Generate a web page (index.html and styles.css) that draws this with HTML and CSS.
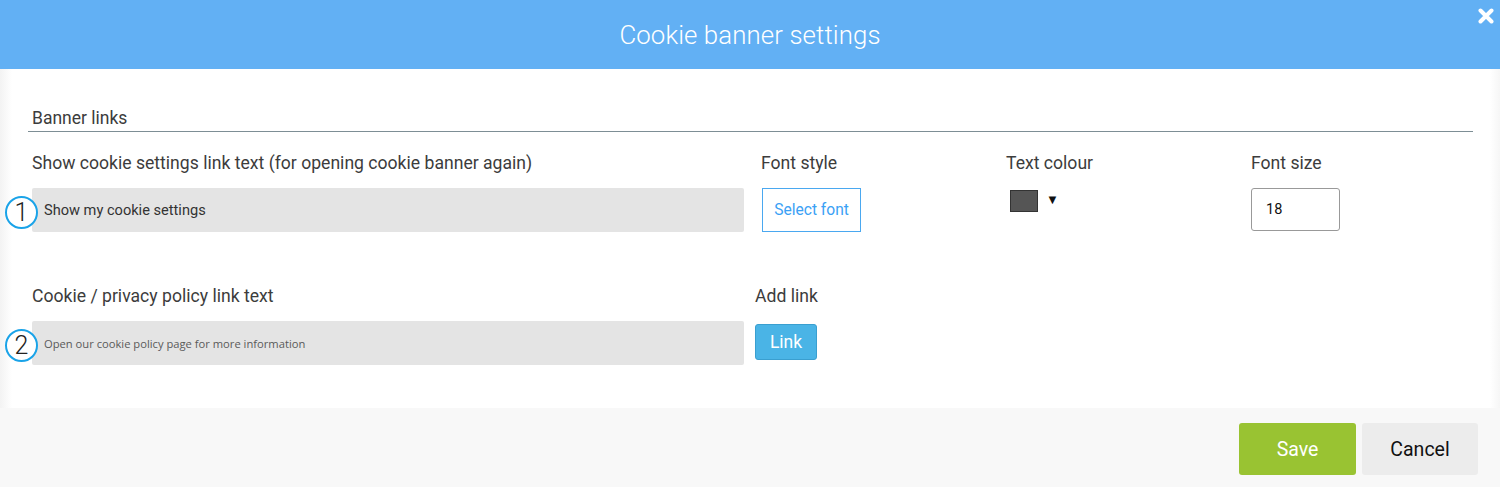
FILE: index.html
```html
<!DOCTYPE html>
<html>
<head>
<meta charset="utf-8">
<link rel="stylesheet" href="styles.css">
</head>
<body>
<div class="modal">
  <header class="head">
    <h1 class="title">Cookie banner settings</h1>
    <svg class="close" width="16" height="16" viewBox="0 0 16 16"><path d="M2.5 2.5 L13.5 13.5 M13.5 2.5 L2.5 13.5" stroke="#fff" stroke-width="4" stroke-linecap="round"/></svg>
  </header>
  <main class="content">
    <div class="section-title">Banner links</div>
    <div class="row">
      <div class="col col-main">
        <div class="label">Show cookie settings link text (for opening cookie banner again)</div>
        <div class="field-wrap">
          <span class="num">1</span>
          <div class="text-input">Show my cookie settings</div>
        </div>
      </div>
      <div class="col col-font">
        <div class="label">Font style</div>
        <button class="btn-outline">Select font</button>
      </div>
      <div class="col col-colour">
        <div class="label">Text colour</div>
        <div class="colour-pick"><span class="swatch"></span><span class="caret">&#9660;</span></div>
      </div>
      <div class="col col-size">
        <div class="label">Font size</div>
        <div class="size-input">18</div>
      </div>
    </div>
    <div class="row row2">
      <div class="col col-main">
        <div class="label">Cookie / privacy policy link text</div>
        <div class="field-wrap">
          <span class="num">2</span>
          <div class="text-input small">Open our cookie policy page for more information</div>
        </div>
      </div>
      <div class="col col-link">
        <div class="label">Add link</div>
        <button class="btn-link">Link</button>
      </div>
    </div>
  </main>
  <footer class="foot">
    <button class="btn-save">Save</button>
    <button class="btn-cancel">Cancel</button>
  </footer>
</div>
</body>
</html>
```
FILE: styles.css
```css
* { box-sizing: border-box; }
html, body { margin: 0; padding: 0; }
body {
  width: 1500px;
  height: 487px;
  overflow: hidden;
  font-family: Roboto, "Liberation Sans", sans-serif;
  color: #333;
  background: #fff;
}
.modal {
  display: flex;
  flex-direction: column;
  height: 487px;
  background: linear-gradient(to right, #f3f3f3 0, #fff 12px, #fff 1490px, #f6f6f6 1500px);
}
.head {
  position: relative;
  height: 69px;
  background: #62b0f4;
  display: flex;
  align-items: center;
  justify-content: center;
}
.title {
  margin: 0;
  font-size: 25.8px;
  font-weight: 300;
  color: #fff;
  letter-spacing: 0.1px;
}
.close {
  position: absolute;
  right: 6px;
  top: 8px;
}
.content {
  flex: 1;
  padding: 27px 27px 0 28px;
}
.section-title {
  font-size: 17.5px;
  color: #3c3c3c;
  padding: 12px 0 3px 4px;
  border-bottom: 1px solid #7d8e95;
}
.row {
  display: flex;
  padding-top: 19px;
}
.row2 { padding-top: 52px; }
.label {
  font-size: 17.6px;
  line-height: 24px;
  color: #3c3c3c;
  margin-bottom: 13px;
}
.col-main { width: 720px; padding-left: 4px; }
.col-font { width: 245px; padding-left: 13px; }
.col-colour { width: 245px; padding-left: 13px; }
.col-size { padding-left: 13px; }
.col-link { padding-left: 7px; }
.field-wrap { position: relative; margin-right: 4px; }
.num {
  position: absolute;
  left: -27px;
  top: 8px;
  width: 33px;
  height: 33px;
  border: 2px solid #1aa3e8;
  border-radius: 50%;
  background: #fff;
  display: flex;
  align-items: center;
  justify-content: center;
  font-size: 25px;
  font-weight: 300;
  color: #222;
}
.text-input {
  height: 44px;
  background: #e4e4e4;
  border-radius: 2px;
  padding-left: 12px;
  display: flex;
  align-items: center;
  font-size: 14.6px;
  color: #333;
}
.text-input.small {
  font-size: 11.2px;
  color: #5a5a5a;
  font-family: "Open Sans", sans-serif;
}
.btn-outline {
  width: 99px;
  height: 44px;
  border: 1px solid #4aa8f0;
  background: #fff;
  color: #3ba1f5;
  font-family: Roboto, sans-serif;
  font-size: 15.6px;
  padding: 0;
  margin-left: 1px;
}
.colour-pick {
  display: flex;
  align-items: center;
  gap: 8px;
  padding: 2px 0 0 4px;
}
.swatch {
  width: 28px;
  height: 22px;
  background: #555;
  border: 1px solid #333;
}
.caret { font-size: 13px; color: #111; margin-top: -3px; }
.size-input {
  width: 89px;
  height: 43px;
  border: 1px solid #999;
  border-radius: 3px;
  padding-left: 14px;
  display: flex;
  align-items: center;
  font-size: 14.5px;
  color: #111;
}
.btn-link {
  margin-top: 3px;
  width: 62px;
  height: 36px;
  background: #4ab4e6;
  border: 1px solid #3a9fd0;
  border-radius: 3px;
  color: #fff;
  font-family: Roboto, sans-serif;
  font-size: 17.5px;
  padding: 0;
}
.foot {
  height: 79px;
  background: #f8f8f8;
  display: flex;
  justify-content: flex-end;
  align-items: flex-start;
  gap: 6px;
  padding: 15px 22px 0 0;
}
.foot button {
  width: 117px;
  height: 52px;
  border: none;
  border-radius: 3px;
  font-family: Roboto, sans-serif;
  font-size: 19.5px;
  padding: 0;
}
.btn-save { background: #99c332; color: #fff; }
.btn-cancel { background: #ececec; color: #111; width: 116px !important; }
```
